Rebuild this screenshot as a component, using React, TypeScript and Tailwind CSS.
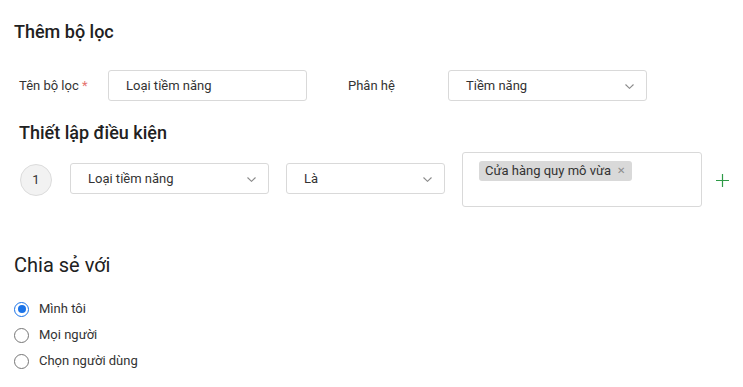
function Chevron() {
  return (
    <svg width="9" height="5" viewBox="0 0 9 5" className="mt-[2px]">
      <path d="M0.5 0.5L4.5 4.3L8.5 0.5" fill="none" stroke="#8a8a8a" strokeWidth="1.1" />
    </svg>
  );
}

function Select({ value, width }: { value: string; width: string }) {
  return (
    <div
      className={`${width} h-[31px] flex items-center justify-between pl-[17px] pr-[12px] border border-[#d9d9d9] rounded-[3px] bg-white text-[13px] text-[#333]`}
    >
      <span>{value}</span>
      <Chevron />
    </div>
  );
}

function Radio({ label, checked }: { label: string; checked?: boolean }) {
  return (
    <label className="flex items-center h-[26px] gap-[10px] text-[13px] text-[#333]">
      <span
        className={`w-[15px] h-[15px] rounded-full flex items-center justify-center ${
          checked ? 'border-[1.5px] border-[#1a73e8]' : 'border border-[#767676]'
        }`}
      >
        {checked && <span className="w-[8px] h-[8px] rounded-full bg-[#1a73e8]" />}
      </span>
      {label}
    </label>
  );
}

export default function App() {
  return (
    <div className="w-[743px] h-[387px] bg-white font-['Roboto',sans-serif] text-[#212121] overflow-hidden">
      {/* Header */}
      <h1 className="pl-[14px] pt-[20px] text-[18px] leading-[24px] font-medium">Thêm bộ lọc</h1>

      {/* Filter name + module */}
      <div className="flex items-center pl-[19px] mt-[26px]">
        <div className="w-[89px] text-[13px] text-[#333]">
          Tên bộ lọc <span className="text-[#e5736f]">*</span>
        </div>
        <div className="w-[199px] h-[31px] flex items-center pl-[17px] border border-[#d9d9d9] rounded-[3px] text-[13px] text-[#333]">
          Loại tiềm năng
        </div>
        <div className="w-[100px] ml-[41px] text-[13px] text-[#333]">Phân hệ</div>
        <Select value="Tiềm năng" width="w-[199px]" />
      </div>

      {/* Conditions */}
      <h2 className="pl-[19px] mt-[20px] text-[18px] leading-[24px] font-medium">Thiết lập điều kiện</h2>
      <div className="flex items-center pl-[20px] mt-[7px]">
        <div className="w-[32px] h-[32px] rounded-full border border-[#dcdcdc] bg-[#f2f2f2] flex items-center justify-center text-[13px] text-[#333]">
          1
        </div>
        <div className="ml-[18px] -mt-[2px]">
          <Select value="Loại tiềm năng" width="w-[199px]" />
        </div>
        <div className="ml-[17px] -mt-[2px]">
          <Select value="Là" width="w-[159px]" />
        </div>
        <div className="ml-[17px] w-[240px] h-[55px] border border-[#d9d9d9] rounded-[3px] pl-[16px] pt-[5px]">
          <span className="inline-flex items-center h-[20px] pl-[6px] pr-[7px] gap-[6px] rounded-[3px] bg-[#d9d9d9] text-[13px] text-[#333]">
            Cửa hàng quy mô vừa
            <span className="text-[10px] text-[#8c8c8c] leading-none">✕</span>
          </span>
        </div>
        <svg width="13" height="13" viewBox="0 0 13 13" className="ml-[14px] mt-[1px]">
          <path d="M6.5 0V13M0 6.5H13" stroke="#2e9a47" strokeWidth="1.2" />
        </svg>
      </div>

      {/* Share */}
      <h2 className="pl-[14px] mt-[44px] text-[20px] leading-[28px] font-normal">Chia sẻ với</h2>
      <div className="pl-[14px] mt-[17px] flex flex-col">
        <Radio label="Mình tôi" checked />
        <Radio label="Mọi người" />
        <Radio label="Chọn người dùng" />
      </div>
    </div>
  );
}
